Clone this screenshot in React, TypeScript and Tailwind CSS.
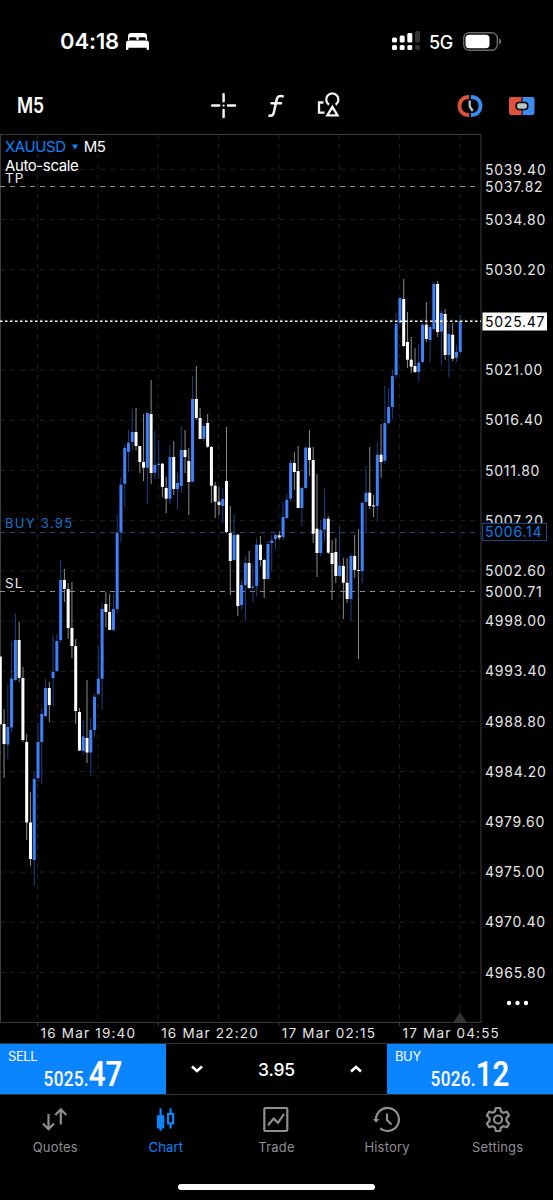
import { ReactNode } from 'react';

type Candle = [dir: 'u' | 'd', top: number, bottom: number, high: number, low: number];

// Body top/bottom and wick high/low, one entry per five minute bar.
const CANDLES: Candle[] = [
  ['d', 656.7, 724.3, 656, 725], ['d', 724, 744, 709, 778], ['u', 727, 744.5, 684, 759], ['u', 678.5, 727.5, 641, 732],
  ['u', 640, 680, 614, 681], ['d', 640, 678, 622, 682], ['d', 678, 740, 667, 742], ['d', 742, 822.5, 734, 840],
  ['d', 822.5, 859, 792, 866], ['u', 779, 860, 772, 886], ['u', 742, 778, 723, 782], ['u', 714, 742, 708, 784],
  ['u', 688, 716, 679, 717], ['d', 688, 705, 682, 722], ['u', 672, 678, 635, 706], ['u', 641, 671, 634, 672],
  ['u', 580, 640, 560, 643], ['d', 580, 589, 569, 602], ['d', 589, 628, 583, 639], ['d', 628, 646, 582, 658],
  ['d', 646, 711, 639, 724], ['d', 712, 750.5, 708, 751], ['u', 736.5, 751, 721, 755], ['d', 738, 752.5, 680, 763],
  ['u', 730, 752.5, 718, 776], ['u', 696.7, 730, 694, 737], ['u', 678.7, 694, 646, 695], ['u', 609, 678.7, 603, 710],
  ['d', 604, 612, 592, 627], ['d', 612, 630, 594, 630], ['u', 609, 630, 594, 631], ['u', 532.7, 609, 514, 613],
  ['u', 484.7, 532, 477, 543], ['u', 448, 483.7, 444, 507], ['u', 442.7, 451.7, 430, 472], ['u', 432, 442, 409, 450],
  ['d', 432, 446, 408, 450], ['d', 446, 462, 446, 473], ['d', 462, 467.7, 414, 481], ['u', 413, 467.7, 412, 504],
  ['d', 414, 473, 380, 484], ['u', 465, 472.7, 431, 479], ['u', 463.7, 465, 440, 479], ['d', 463.7, 487, 463, 497],
  ['d', 488, 498.7, 477, 513], ['u', 457, 498.7, 445, 504], ['d', 457, 489, 441, 495], ['u', 483, 489, 473, 509],
  ['u', 450, 486, 426, 493], ['d', 450, 457, 430, 473], ['d', 461, 482, 448, 515], ['u', 399, 481.7, 376, 482],
  ['d', 399, 418, 366, 420], ['d', 418, 439, 408, 439], ['u', 426, 438.7, 423, 441], ['d', 423, 446.7, 414, 448],
  ['d', 447, 485.7, 446, 503], ['d', 485.7, 501.7, 482, 518], ['d', 501.7, 505, 487, 515], ['u', 499, 506, 488, 523],
  ['d', 481, 532, 427, 533], ['d', 533, 561, 506, 595], ['u', 534.7, 560, 514, 561], ['d', 534.7, 606, 534, 616],
  ['u', 585, 605, 580, 610], ['u', 563, 585, 556, 621], ['d', 563, 588, 551, 589], ['u', 586.5, 587.7, 564, 602],
  ['u', 544.7, 586, 538, 596], ['d', 544.7, 560, 536, 566], ['d', 560, 579, 559, 598], ['u', 544, 579, 541, 579],
  ['u', 540.5, 543, 535, 571], ['u', 535, 539, 533, 549], ['d', 535.3, 537.5, 531, 540], ['u', 517, 537, 502, 540],
  ['u', 499.7, 518, 494, 519], ['u', 463, 498.7, 460, 502], ['d', 463, 472, 452, 490], ['d', 471, 508, 446, 508],
  ['u', 488, 508, 487, 526], ['u', 447.7, 488, 446, 489], ['d', 447.7, 460, 430, 476], ['d', 460, 533.7, 447, 543],
  ['d', 528.7, 553, 474, 577], ['u', 530, 553, 520, 556], ['u', 518.7, 529.7, 488, 541], ['d', 518.7, 552.7, 516, 554],
  ['d', 553, 564, 540, 600], ['d', 552, 576, 538, 583], ['u', 565.7, 576, 526, 577], ['d', 566, 582.7, 558, 619],
  ['d', 582.7, 599, 558, 603], ['u', 556, 599, 554, 621], ['d', 556, 570, 535, 578], ['d', 570, 571, 529, 659],
  ['u', 502.7, 571, 502, 583], ['u', 492.7, 502, 466, 533], ['d', 492.7, 506, 447, 509], ['d', 505.4, 506.4, 495, 517],
  ['u', 454.7, 506, 442, 522], ['d', 454.7, 462, 424, 478], ['u', 423, 460.7, 386, 464], ['u', 407, 423, 388, 424],
  ['u', 376, 407, 370, 419], ['u', 323.7, 375, 313, 378], ['u', 298, 323, 297, 325], ['d', 299, 346, 279, 347],
  ['d', 342, 359.7, 312, 368], ['d', 359.7, 366.7, 337, 373], ['d', 366, 372, 348, 373], ['u', 362.7, 372, 344, 382],
  ['u', 324.7, 362, 323, 363], ['d', 324.7, 339, 302, 342], ['u', 327, 340, 325, 362], ['u', 284, 329, 282, 331],
  ['d', 284, 332, 281, 337], ['u', 313, 331.7, 311, 365], ['d', 314, 355, 309, 360], ['u', 334, 355, 323, 377],
  ['d', 334.7, 358.7, 323, 361], ['u', 352, 357.7, 345, 362], ['u', 321, 352, 315, 354],
];

const STEP = 3.77;
const TICKS = Array.from({ length: 17 }, (_, i) => 5039.4 - i * 4.6);
const GRID_X = Array.from({ length: 8 }, (_, i) => 37.6 + i * 60.33);
const DATES = ['16 Mar 19:40', '16 Mar 22:20', '17 Mar 02:15', '17 Mar 04:55'];

const priceY = (price: number) => 169.3 + (5039.4 - price) * 10.913;

function PriceLabel({ price, className = 'fill-[#e6e6e6]' }: { price: number; className?: string }) {
  return (
    <text x={485} y={priceY(price) + 5.2} className={`text-[14px] tracking-[0.75px] ${className}`}>
      {price.toFixed(2)}
    </text>
  );
}

function StatusBar() {
  return (
    <div className="flex h-[82px] items-center justify-between pr-[51px] pl-[60px]">
      <div className="flex items-center gap-[7px]">
        <span className="text-[22px] font-semibold tracking-[-0.1px]">04:18</span>
        <svg width="23" height="17" viewBox="0 0 23 17" fill="white">
          <path d="M2 7V3.2A3.2 3.2 0 0 1 5.2 0h12.6A3.2 3.2 0 0 1 21 3.2V7h-1.300V5.500a1.300 1.300 0 0 0-1.300-1.300h-4.600a1.300 1.300 0 0 0-1.300 1.300V7h-2V5.500a1.300 1.300 0 0 0-1.300-1.300H4.600A1.300 1.300 0 0 0 3.300 5.500V7z" />
          <path d="M0 16V10.200A2.700 2.700 0 0 1 2.700 7.500h17.600A2.700 2.700 0 0 1 23 10.200V16a1 1 0 0 1-1 1h-.4a1 1 0 0 1-1-1v-1.200H2.400V16a1 1 0 0 1-1 1H1a1 1 0 0 1-1-1z" />
        </svg>
      </div>
      <div className="flex items-center">
        <svg width="28" height="20" viewBox="0 0 28 20" fill="white">
          <rect x="0" y="6.500" width="5" height="5" rx="1.500" />
          <rect x="7.700" y="4.500" width="5" height="7" rx="1.500" />
          <rect x="15.300" y="2" width="5" height="9.500" rx="1.500" />
          <rect x="23" y="0" width="5" height="11.500" rx="1.500" fill="#333" />
          <rect x="0" y="14" width="5" height="5" rx="1.500" />
          <rect x="7.700" y="14" width="5" height="5" rx="1.500" />
          <rect x="15.300" y="14" width="5" height="5" rx="1.500" />
          <rect x="23" y="14" width="5" height="5" rx="1.500" fill="#333" />
        </svg>
        <span className="mt-[2px] ml-[9px] w-[34px] text-[18px] font-medium tracking-[-0.4px]">5G</span>
        <svg width="39" height="19" viewBox="0 0 39 19">
          <rect x="0.700" y="0.700" width="33.600" height="17.600" rx="5.500" fill="none" stroke="#6a6a6a" strokeWidth="1.400" />
          <rect x="2.500" y="2.800" width="24" height="13.400" rx="3.600" fill="white" />
          <path d="M36 6.500c1.700.5 2.300 1.700 2.300 3s-.6 2.500-2.300 3z" fill="#6a6a6a" />
        </svg>
      </div>
    </div>
  );
}

function Toolbar() {
  return (
    <div className="flex h-12 items-center pr-[18px] pl-[17px]">
      <div className="w-[193px]">
        <span className="inline-block origin-left scale-x-[0.83] text-[21px] leading-6 font-semibold">M5</span>
      </div>
      <div className="flex flex-1 items-center">
        <svg width="28" height="28" viewBox="0 0 28 28" stroke="#f2f2f2" strokeWidth="2.500" strokeLinecap="round">
          <path d="M13.600 2.200v7M13.600 18v7M2.200 13.600h7M18 13.600h7" />
          <path d="M13.600 13.600h.01" strokeWidth="2.300" />
        </svg>
        <svg width="28" height="28" viewBox="0 0 28 28" fill="none" stroke="#f2f2f2" strokeWidth="2.500" strokeLinecap="round" className="ml-6">
          <path d="M20.700 4.300c-3.500-1-5.300.2-6 3.300l-2.900 12.900c-.6 2.700-2.100 3.700-4.400 3.200M9.500 11.300h9.500" />
        </svg>
        <svg width="28" height="28" viewBox="0 0 28 28" fill="none" stroke="#f2f2f2" strokeWidth="2.300" className="ml-6">
          <path d="M9.500 10.500H5v10.200h5.500M15 12.700a6.100 6.100 0 1 1 6.600 0M18.400 14.800 23.500 23.300h-10.200z" />
        </svg>
      </div>
      <svg width="26" height="22" viewBox="0 0 26 22" fill="none">
        <path d="M12.200 2C5.800 2 2.500 6 2.500 11s3.300 9 9.700 9" stroke="#e0503f" strokeWidth="3.800" />
        <path d="M13.800 2c6.400 0 9.700 4 9.700 9s-3.300 9-9.700 9" stroke="#3b8cf0" strokeWidth="3.800" />
        <path d="M12.700 5.500V11.500l3 4.500" stroke="#b9c0c6" strokeWidth="2.300" />
      </svg>
      <svg width="26" height="18" viewBox="0 0 26 18" className="ml-[26px]">
        <path d="M2 0h10.500v18H2a2 2 0 0 1-2-2V2a2 2 0 0 1 2-2z" fill="#e0503f" />
        <path d="M13.500 0H23.500a2 2 0 0 1 2 2v14a2 2 0 0 1-2 2H13.500z" fill="#3b8cf0" />
        <rect x="7.200" y="5.500" width="11.500" height="7" rx="3" fill="#b9c0c6" stroke="black" strokeWidth="1.500" />
      </svg>
    </div>
  );
}

function Chart() {
  return (
    <div className="relative h-[913px]">
      <svg width="553" height="913" viewBox="0 130 553 913">
        <g stroke="#1f1f1f" strokeDasharray="5 5">
          {TICKS.map((p) => (
            <line key={p} x1="0" x2="481" y1={priceY(p)} y2={priceY(p)} />
          ))}
          {GRID_X.map((x) => (
            <line key={x} x1={x} x2={x} y1="134" y2="1022" />
          ))}
        </g>
        <path d="M460 1012l6.500 10h-13z" fill="#333" />
        <path d="M.5 1022.500v-888h480.500v888z" fill="none" stroke="#3c3c3c" />

        <g strokeDasharray="5 5">
          <line x1="0" x2="480" y1="186.500" y2="186.500" stroke="#8c8c8c" />
          <line x1="0" x2="480" y1="532.500" y2="532.500" stroke="#1d4a80" />
          <line x1="0" x2="480" y1="591.500" y2="591.500" stroke="#8c8c8c" />
        </g>

        {CANDLES.map(([dir, top, bottom, high, low], i) => (
          <g key={i}>
            <rect x={i * STEP - 0.2} y={high} width="1" height={low - high} fill={dir === 'u' ? '#1e3f80' : '#8a8a8a'} />
            <rect x={i * STEP - 1.2} y={top} width="3" height={bottom - top} fill={dir === 'u' ? '#3f82f7' : '#fff'} />
          </g>
        ))}
        <line x1="0" x2="481" y1="321.200" y2="321.200" stroke="white" strokeWidth="1.500" strokeDasharray="2.500 2.500" />

        {TICKS.map((p) => (
          <PriceLabel key={p} price={p} />
        ))}
        <PriceLabel price={5037.82} />
        <PriceLabel price={5000.71} />
        <rect x="482.500" y="312.500" width="64.500" height="18" fill="white" />
        <PriceLabel price={5025.47} className="fill-black" />
        <rect x="482.500" y="523.500" width="64" height="17" fill="black" stroke="#154a85" />
        <PriceLabel price={5006.14} className="fill-[#0f7be6]" />

        <g className="fill-[#e6e6e6] text-[13.500px] tracking-[1px]">
          <text x="5" y="182.500">TP</text>
          <text x="5" y="587.500">SL</text>
          <text x="5" y="528" className="fill-[#1672cc] text-[13px] tracking-[1.300px]">BUY 3.95</text>
        </g>
        <g className="fill-[#e6e6e6] text-[13.500px] tracking-[1.200px]">
          {DATES.map((d, i) => (
            <text key={d} x={40.5 + i * 120.66} y="1037.500">{d}</text>
          ))}
        </g>
        <g stroke="#3c3c3c">
          {DATES.map((d, i) => (
            <line key={d} x1={37.6 + i * 120.66} x2={37.6 + i * 120.66} y1="1022" y2="1026" />
          ))}
        </g>
        <g fill="white">
          <circle cx="509" cy="1003" r="2.200" />
          <circle cx="517.500" cy="1003" r="2.200" />
          <circle cx="526" cy="1003" r="2.200" />
        </g>
      </svg>
      <div className="absolute top-[7px] left-[5px] text-[15px] leading-[19px] tracking-[-0.4px]">
        <div className="flex items-center">
          <span className="text-[#0a84ff]">XAUUSD</span>
          <svg width="6" height="6" viewBox="0 0 6 6" className="mx-[6px]">
            <path d="M0 .5h6l-3 5z" fill="#0a84ff" />
          </svg>
          <span>M5</span>
        </div>
        <div>Auto-scale</div>
      </div>
    </div>
  );
}

function Quote({ side, whole, cents }: { side: string; whole: string; cents: string }) {
  return (
    <div className="w-[166px] bg-[#0a84ff]">
      <div className="h-[17px] pt-[4px] pl-2 text-[13px] leading-4 tracking-[-0.4px]">{side}</div>
      <div className="flex scale-x-[0.84] items-baseline justify-center font-['Roboto'] leading-[28px]">
        <span className="text-[20.500px] font-medium tracking-[0.3px]">{whole}.</span>
        <span className="text-[35px] font-semibold">{cents}</span>
      </div>
    </div>
  );
}

function TradePanel() {
  return (
    <div className="flex h-[52px] border-y border-[#333]">
      <Quote side="SELL" whole="5025" cents="47" />
      <div className="flex flex-1 items-center justify-between px-[25px]">
        <svg width="12" height="8" viewBox="0 0 12 8" fill="none" stroke="white" strokeWidth="2.700">
          <path d="M1 1.500l5 4.500 5-4.500" />
        </svg>
        <span className="pt-[3px] text-[17.500px] font-medium tracking-[-0.2px]">3.95</span>
        <svg width="12" height="8" viewBox="0 0 12 8" fill="none" stroke="white" strokeWidth="2.700">
          <path d="M1 6.500 6 2l5 4.500" />
        </svg>
      </div>
      <Quote side="BUY" whole="5026" cents="12" />
    </div>
  );
}

function Tab({ label, active, children }: { label: string; active?: boolean; children: ReactNode }) {
  return (
    <div className={`flex flex-1 flex-col items-center ${active ? 'text-[#0a84ff]' : 'text-[#8e8e93]'}`}>
      <svg width="28" height="28" viewBox="0 0 28 28" fill="none" stroke="currentColor" strokeWidth="2.200">
        {children}
      </svg>
      <span className="mt-[6px] text-[13px] leading-4 tracking-[0.2px]">{label}</span>
    </div>
  );
}

function TabBar() {
  return (
    <div className="flex h-[80px] pt-[10px]">
      <Tab label="Quotes">
        <path d="M7.500 9v15M2 18.500l5.500 5.700 5.500-5.700M19.800 19.500V4.500M14.300 10l5.500-5.700 5.500 5.700" />
      </Tab>
      <Tab label="Chart" active>
        <path d="M8.600 3.300v22.400M18.600 3.300v5M18.600 18.500v5" />
        <path d="M6 11.300h5.200v11H6z" fill="currentColor" />
        <path d="M16.100 9h5v9.300h-5z" />
      </Tab>
      <Tab label="Trade">
        <rect x="2.300" y="3" width="23" height="23" rx="1.200" />
        <path d="M6 20.200l5.700-6.600 4.300 4.200 6-8.800" />
      </Tab>
      <Tab label="History">
        <path d="M3 15.500a11.500 11.500 0 1 1 4.200 7.900M14 8.500v6.500l4.500 4.500" />
        <path d="M0 14h6.200L3.100 17.800z" fill="currentColor" stroke="none" />
      </Tab>
      <Tab label="Settings">
        <circle cx="14" cy="14.500" r="4" />
        <path d="M11.800 3h4.400l.8 3.500 2.400 1.300 3.500-1.100 2.200 3.800L22.500 13.100v2.800l2.600 2.600-2.200 3.800-3.500-1.100L17 22.500l-.8 3.500h-4.400L11 22.500l-2.400-1.300-3.500 1.100L2.900 18.500l2.600-2.600v-2.800L2.900 10.500l2.200-3.800 3.500 1.100L11 6.500z" strokeLinejoin="round" />
      </Tab>
    </div>
  );
}

export default function App() {
  return (
    <div className="flex h-[1200px] w-[553px] flex-col overflow-hidden bg-black font-['Inter',sans-serif] text-white">
      <StatusBar />
      <Toolbar />
      <Chart />
      <TradePanel />
      <TabBar />
      <div className="mx-auto mt-[9px] h-[6px] w-[197px] rounded-full bg-white" />
    </div>
  );
}
